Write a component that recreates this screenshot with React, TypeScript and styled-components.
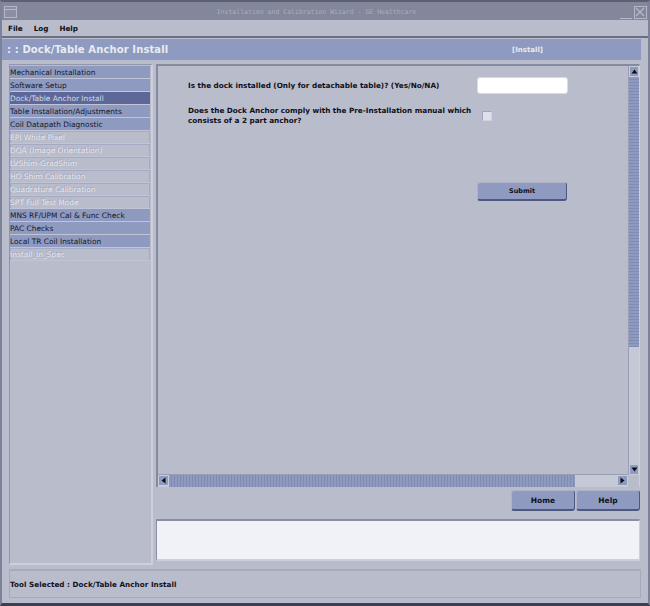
import React from "react";
import styled, { createGlobalStyle } from "styled-components";

const Global = createGlobalStyle`
  html, body { margin: 0; padding: 0; background: #b9bccb; }
  * { box-sizing: border-box; }
`;

const Frame = styled.div`
  width: 650px; height: 606px; overflow: hidden;
  display: flex; flex-direction: column;
  background: #b9bccb;
  font-family: "DejaVu Sans", sans-serif;
  border-top: 2px solid #5d6072;
  border-left: 2px solid #7e8298;
  border-right: 2px solid #7e8298;
  border-bottom: 3px solid #3c3f52;
`;
const TitleBar = styled.div`
  height: 18px; flex: none; display: flex; align-items: center;
  background: #83879c; padding: 1px 1px 0 2px;
`;
const TitleText = styled.div`
  flex: 1; text-align: center; font-family: "DejaVu Sans Mono", monospace;
  font-size: 6.5px; color: #a9adbe; padding-right: 4px;
`;
const WindowGlyph = styled.svg`
  width: 14px; height: 14px; flex: none; display: block;
`;
const MenuBar = styled.div`
  height: 18px; flex: none; display: flex; align-items: center; gap: 11px;
  padding: 0 6px; background: #b9bccb;
  border-bottom: 2px solid #6b6f86;
`;
const MenuItem = styled.span`
  font-size: 7.2px; font-weight: 700; color: #0c0c14;
`;
const Header = styled.div`
  height: 21px; flex: none; margin: 1px 7px 0 0;
  display: flex; align-items: center; justify-content: space-between;
  background: #8e9abf; color: #e9ebf3; padding: 0 98px 0 5px;
`;
const HeaderTitle = styled.span`
  font-size: 10px; font-weight: 700; letter-spacing: 0.12px;
`;
const HeaderTag = styled.span`
  font-size: 7px; font-weight: 700;
`;
const Body = styled.div`
  flex: none; display: flex; gap: 3px; padding: 4px 8px 0 7px;
`;
const Sidebar = styled.div`
  width: 144px; height: 501px; flex: none; padding: 1px 0 0 0;
  display: flex; flex-direction: column; gap: 0;
  border-top: 1px solid #9296aa; border-left: 1px solid #9296aa;
  border-right: 2px solid #cdd0dc; border-bottom: 2px solid #cdd0dc;
`;
const NavItem = styled.div<{ $state: "on" | "sel" | "off" }>`
  width: 140px; height: 13px; flex: none; display: flex; align-items: center;
  padding-left: 0; font-size: 7.45px; white-space: nowrap;
  background: ${p => (p.$state === "on" ? "#8e9abf" : p.$state === "sel" ? "#5d6899" : "#b9bccb")};
  color: ${p => (p.$state === "on" ? "#15172a" : p.$state === "sel" ? "#d8dbe8" : "#e3e5ee")};
  border-bottom: 1px solid #c0c4d6;
  border-top: ${p => (p.$state === "off" ? "1px solid #a4a9c4" : "none")};
  text-shadow: ${p => (p.$state === "off" ? "-1px -1px 0 #a3a7bb" : "none")};
  box-shadow: ${p => (p.$state === "off" ? "inset 1px 0 #a4a9c4, inset -1px 0 #a4a9c4" : "none")};
`;
const Main = styled.div`
  flex: 1; min-width: 0; display: flex; flex-direction: column;
`;
const ScrollArea = styled.div`
  width: 484px; height: 423px; flex: none; display: flex; flex-direction: column;
  border-top: 2px solid #858a9e; border-left: 2px solid #858a9e;
  border-right: 1px solid #cdd0dc;
`;
const ScrollTop = styled.div`
  flex: 1; min-height: 0; display: flex;
`;
const Form = styled.div`
  flex: 1; min-width: 0; display: flex; flex-direction: column;
  padding: 11px 0 0 30px;
`;
const QuestionRow = styled.div<{ $h: number }>`
  display: flex; align-items: center; height: ${p => p.$h}px; margin-bottom: 12px;
`;
const Question = styled.div`
  width: 289px; flex: none; font-size: 7.25px; font-weight: 700; line-height: 10px; color: #101018;
`;
const TextBox = styled.div`
  width: 91px; height: 17px; background: #fff; border-radius: 3px;
  border: 1px solid #d8dae4;
`;
const Check = styled.div`
  width: 10px; height: 10px; margin-left: 5px;
  background: #dfe1ea; border: 1px solid #a0a4ba; border-right-color: #d0d3de; border-bottom-color: #d0d3de;
`;
const SubmitRow = styled.div`
  display: flex; justify-content: flex-start; padding-left: 289px; margin-top: 44px;
`;
const Button = styled.div<{ $w: number; $h: number; $size: number }>`
  width: ${p => p.$w}px; height: ${p => p.$h}px; flex: none;
  display: flex; align-items: center; justify-content: center;
  background: #8e9abf; border-radius: 3px;
  border: 1px solid #aeb2c6; border-right-color: #4f5680; border-bottom: 2px solid #4f5680;
  font-size: ${p => p.$size}px; font-weight: 700; color: #10101c;
`;
const VBar = styled.div`
  width: 11px; flex: none; display: flex; flex-direction: column;
  background: #c5c8d5; border-left: 1px solid #9a9eb2;
`;
const HBar = styled.div`
  height: 13px; flex: none; display: flex; margin-right: 11px; margin-top: -1px;
  background: #c5c8d5; border-top: 1px solid #9a9eb2;
`;
const Arrow = styled.div<{ $w: number }>`
  width: ${p => p.$w}px; height: 11px; flex: none; display: flex; align-items: center; justify-content: center;
  background: #8e9abf; border: 1px solid #c8cbd8;
`;
const VThumb = styled.div`
  height: 270px; flex: none; background: repeating-linear-gradient(to bottom, #8e9abf 0 2px, #7f8bb3 2px 3px);
`;
const HThumb = styled.div`
  width: 406px; flex: none; background: repeating-linear-gradient(to right, #8e9abf 0 2px, #7f8bb3 2px 3px);
`;
const Spacer = styled.div`
  flex: 1;
`;
const ButtonRow = styled.div`
  display: flex; justify-content: flex-end; gap: 1px; padding: 3px 0 0 0; width: 484px;
`;
const MessageBox = styled.div`
  width: 484px; height: 42px; flex: none; margin-top: 8px; background: #f1f2f7;
  border-top: 2px solid #8a8ea3; border-left: 1px solid #8a8ea3;
  border-right: 1px solid #cdd0dc; border-bottom: 2px solid #cdd0dc;
`;
const StatusBar = styled.div`
  height: 29px; flex: none; margin: auto 7px 5px 7px; display: flex; align-items: center;
  border: 1px solid #a7aabc; border-top-width: 2px;
  font-size: 7.2px; font-weight: 700; color: #10101c; letter-spacing: 0.05px; padding-left: 0;
`;

const nav: [string, "on" | "sel" | "off"][] = [
  ["Mechanical Installation", "on"],
  ["Software Setup", "on"],
  ["Dock/Table Anchor Install", "sel"],
  ["Table Installation/Adjustments", "on"],
  ["Coil Datapath Diagnostic", "on"],
  ["EPI White Pixel", "off"],
  ["DQA (Image Orientation)", "off"],
  ["LVShim-GradShim", "off"],
  ["HO Shim Calibration", "off"],
  ["Quadrature Calibration", "off"],
  ["SPT Full Test Mode", "off"],
  ["MNS RF/UPM Cal & Func Check", "on"],
  ["PAC Checks", "on"],
  ["Local TR Coil Installation", "on"],
  ["Install_In_Spec", "off"],
];

const Tri = ({ d }: { d: string }) => (
  <svg width="7" height="7" viewBox="0 0 7 7"><path d={d} fill="#0c0c18" /></svg>
);

export default function App() {
  return (
    <Frame>
      <Global />
      <TitleBar>
        <WindowGlyph viewBox="0 0 14 14">
          <rect x="0.5" y="1.5" width="12" height="11" fill="#8b8fa3" stroke="#b4b7c7" />
          <path d="M1 4.5h11" stroke="#b4b7c7" />
        </WindowGlyph>
        <TitleText>Installation and Calibration Wizard - GE Healthcare</TitleText>
        <WindowGlyph viewBox="0 0 14 14">
          <path d="M1 13.5h12" stroke="#b4b7c7" />
        </WindowGlyph>
        <WindowGlyph viewBox="0 0 14 14">
          <rect x="1.5" y="1.5" width="12" height="12" fill="none" stroke="#b4b7c7" />
          <path d="M3 3l8 8M11 3L3 11" stroke="#b4b7c7" strokeWidth="1.4" />
        </WindowGlyph>
      </TitleBar>
      <MenuBar>
        <MenuItem>File</MenuItem>
        <MenuItem>Log</MenuItem>
        <MenuItem>Help</MenuItem>
      </MenuBar>
      <Header>
        <HeaderTitle>: : Dock/Table Anchor Install</HeaderTitle>
        <HeaderTag>[Install]</HeaderTag>
      </Header>
      <Body>
        <Sidebar>
          {nav.map(([label, state]) => (
            <NavItem key={label} $state={state}>{label}</NavItem>
          ))}
        </Sidebar>
        <Main>
          <ScrollArea>
            <ScrollTop>
              <Form>
                <QuestionRow $h={17}>
                  <Question>Is the dock installed (Only for detachable table)? (Yes/No/NA)</Question>
                  <TextBox />
                </QuestionRow>
                <QuestionRow $h={20}>
                  <Question>Does the Dock Anchor comply with the Pre-Installation manual which consists of a 2 part anchor?</Question>
                  <Check />
                </QuestionRow>
                <SubmitRow>
                  <Button $w={90} $h={19} $size={6.5}>Submit</Button>
                </SubmitRow>
              </Form>
              <VBar>
                <Arrow $w={10}><Tri d="M3.5 1.5L6.5 5.5H.5z" /></Arrow>
                <VThumb />
                <Spacer />
                <Arrow $w={10}><Tri d="M3.5 5.5L6.5 1.5H.5z" /></Arrow>
              </VBar>
            </ScrollTop>
            <HBar>
              <Arrow $w={11}><Tri d="M1.5 3.5L5.5.5V6.5z" /></Arrow>
              <HThumb />
              <Spacer />
              <Arrow $w={11}><Tri d="M5.5 3.5L1.5.5V6.5z" /></Arrow>
            </HBar>
          </ScrollArea>
          <ButtonRow>
            <Button $w={64} $h={21} $size={7.5}>Home</Button>
            <Button $w={64} $h={21} $size={7.5}>Help</Button>
          </ButtonRow>
          <MessageBox />
        </Main>
      </Body>
      <StatusBar>Tool Selected : Dock/Table Anchor Install</StatusBar>
    </Frame>
  );
}
